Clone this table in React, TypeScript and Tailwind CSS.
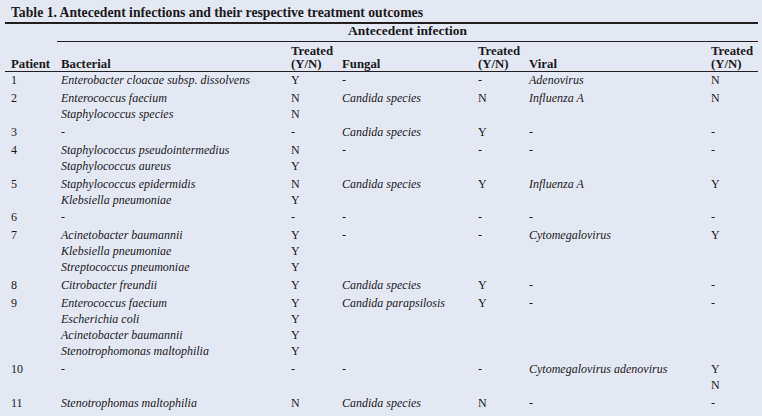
import React from "react";

type Row = {
  p: string;
  bac: string[];
  bacT: string[];
  fun: string[];
  funT: string[];
  vir: string[];
  virT: string[];
};

const rows: Row[] = [
  { p: "1", bac: ["Enterobacter cloacae subsp. dissolvens"], bacT: ["Y"], fun: ["-"], funT: ["-"], vir: ["Adenovirus"], virT: ["N"] },
  { p: "2", bac: ["Enterococcus faecium", "Staphylococcus species"], bacT: ["N", "N"], fun: ["Candida species"], funT: ["N"], vir: ["Influenza A"], virT: ["N"] },
  { p: "3", bac: ["-"], bacT: ["-"], fun: ["Candida species"], funT: ["Y"], vir: ["-"], virT: ["-"] },
  { p: "4", bac: ["Staphylococcus pseudointermedius", "Staphylococcus aureus"], bacT: ["N", "Y"], fun: ["-"], funT: ["-"], vir: ["-"], virT: ["-"] },
  { p: "5", bac: ["Staphylococcus epidermidis", "Klebsiella pneumoniae"], bacT: ["N", "Y"], fun: ["Candida species"], funT: ["Y"], vir: ["Influenza A"], virT: ["Y"] },
  { p: "6", bac: ["-"], bacT: ["-"], fun: ["-"], funT: ["-"], vir: ["-"], virT: ["-"] },
  { p: "7", bac: ["Acinetobacter baumannii", "Klebsiella pneumoniae", "Streptococcus pneumoniae"], bacT: ["Y", "Y", "Y"], fun: ["-"], funT: ["-"], vir: ["Cytomegalovirus"], virT: ["Y"] },
  { p: "8", bac: ["Citrobacter freundii"], bacT: ["Y"], fun: ["Candida species"], funT: ["Y"], vir: ["-"], virT: ["-"] },
  { p: "9", bac: ["Enterococcus faecium", "Escherichia coli", "Acinetobacter baumannii", "Stenotrophomonas maltophilia"], bacT: ["Y", "Y", "Y", "Y"], fun: ["Candida parapsilosis"], funT: ["Y"], vir: ["-"], virT: ["-"] },
  { p: "10", bac: ["-"], bacT: ["-"], fun: ["-"], funT: ["-"], vir: ["Cytomegalovirus adenovirus"], virT: ["Y", "N"] },
  { p: "11", bac: ["Stenotrophomas maltophilia"], bacT: ["N"], fun: ["Candida species"], funT: ["N"], vir: ["-"], virT: ["-"] },
];

const GRID = "grid grid-cols-[52px_230px_51px_136px_51px_182px_51px]";

function Names({ items }: { items: string[] }) {
  return (
    <div className="pl-[4px] flex flex-col">
      {items.map((t, i) => (
        <div key={i} className={t === "-" ? "not-italic" : "italic"}>
          {t}
        </div>
      ))}
    </div>
  );
}

function Marks({ items }: { items: string[] }) {
  return (
    <div className="pl-[4px] flex flex-col">
      {items.map((t, i) => (
        <div key={i}>{t}</div>
      ))}
    </div>
  );
}

function Treated() {
  return (
    <div className="pl-[4px] flex flex-col">
      <div>Treated</div>
      <div>(Y/N)</div>
    </div>
  );
}

export default function App() {
  return (
    <div className="w-[762px] h-[416px] overflow-hidden bg-[#e3e8f3] text-[#1c1a1b] font-['Liberation_Serif',serif]">
      <div className="ml-[5px] w-[753px]">
        <div className="pl-[6px] pt-[5px] pb-[1px] leading-[16px] text-[13.7px] font-bold border-b-2 border-[#231f20]">
          Table 1. Antecedent infections and their respective treatment outcomes
        </div>
        <div className={GRID + " text-[13.5px] font-bold"}>
          <div />
          <div className="col-span-6 text-center leading-[14px] pb-[3px] border-b border-[#231f20]">
            Antecedent infection
          </div>
        </div>
        <div className={GRID + " items-end text-[12.8px] font-bold leading-[12.5px] pt-[3px] pb-[1px] border-b border-[#231f20]"}>
          <div className="pl-[6px]">Patient</div>
          <div className="pl-[4px]">Bacterial</div>
          <Treated />
          <div className="pl-[4px]">Fungal</div>
          <Treated />
          <div className="pl-[4px]">Viral</div>
          <Treated />
        </div>
        <div className="text-[12px] leading-[16px]">
          {rows.map((r) => (
            <div key={r.p} className={GRID + " items-start pb-[1.9px]"}>
              <div className="pl-[6px]">{r.p}</div>
              <Names items={r.bac} />
              <Marks items={r.bacT} />
              <Names items={r.fun} />
              <Marks items={r.funT} />
              <Names items={r.vir} />
              <Marks items={r.virT} />
            </div>
          ))}
        </div>
      </div>
    </div>
  );
}
